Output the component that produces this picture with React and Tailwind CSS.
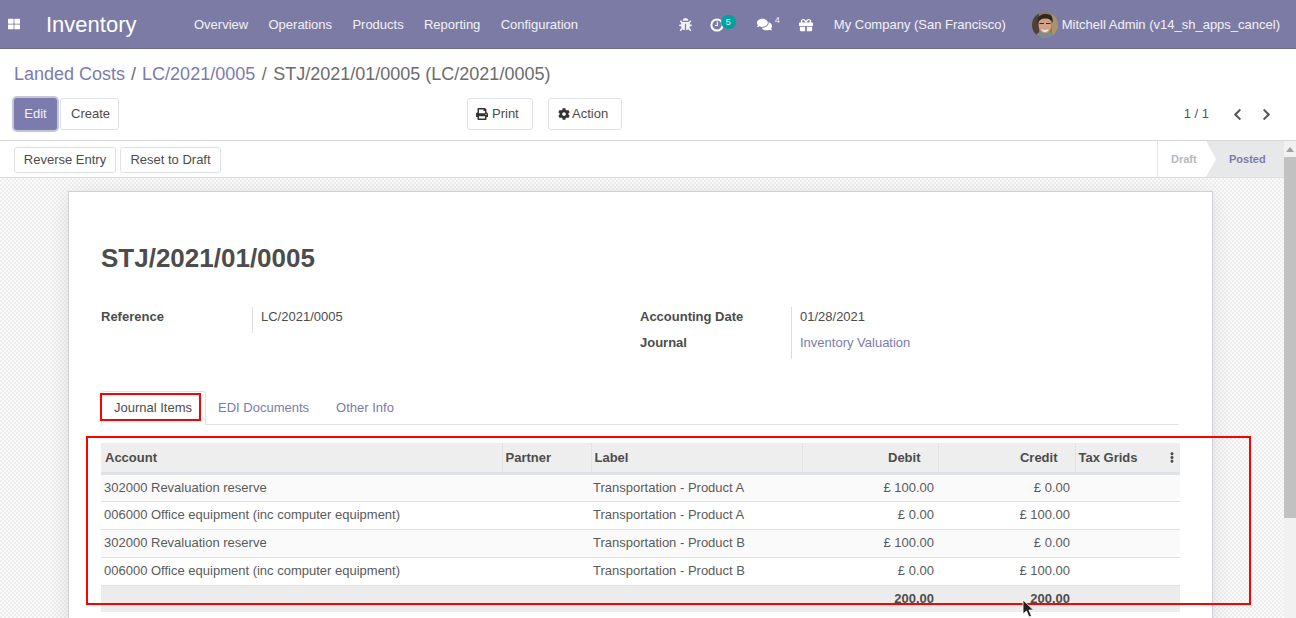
import { FaBug, FaComments, FaGift, FaPrint, FaCog, FaChevronLeft, FaChevronRight, FaEllipsisV, FaThLarge } from 'react-icons/fa';

const rows = [
  ['302000 Revaluation reserve', 'Transportation - Product A', '£ 100.00', '£ 0.00'],
  ['006000 Office equipment (inc computer equipment)', 'Transportation - Product A', '£ 0.00', '£ 100.00'],
  ['302000 Revaluation reserve', 'Transportation - Product B', '£ 100.00', '£ 0.00'],
  ['006000 Office equipment (inc computer equipment)', 'Transportation - Product B', '£ 0.00', '£ 100.00'],
];

function Avatar() {
  return (
    <svg width="26" height="26" viewBox="0 0 26 26" className="shrink-0 mr-1 blur-[0.4px]">
      <defs>
        <clipPath id="avatarClip"><circle cx="13" cy="13" r="13" /></clipPath>
      </defs>
      <g clipPath="url(#avatarClip)">
        <rect width="26" height="26" fill="#8d7a5c" />
        <rect x="0" y="0" width="7" height="26" fill="#4e4038" />
        <rect x="20" y="0" width="6" height="26" fill="#a89468" />
        <path d="M3 26c1-5 5-7 10-7s9 2 10 7z" fill="#7f8d8c" />
        <ellipse cx="13" cy="13" rx="6.500" ry="8" fill="#d0a084" />
        <path d="M5.500 11C5 4 9 2 14 2s7.500 3 6.500 9c-1-3-3-4.500-7-4.500S7 8 5.500 11z" fill="#2e2620" />
        <path d="M7.500 11.500h4.500M14 11.500h4.500" stroke="#3a2e28" strokeWidth="1" />
        <path d="M9.500 17c2 1.500 5 1.500 7 0-.5 2-2 3-3.500 3s-3-1-3.500-3z" fill="#f4ece4" />
      </g>
    </svg>
  );
}

function ClockIcon() {
  return (
    <svg width="14" height="14" viewBox="0 0 14 14" fill="none" stroke="white" className="shrink-0">
      <circle cx="7" cy="7" r="5.600" strokeWidth="2" />
      <path d="M7.300 3.500V7.500H5" strokeWidth="1.100" />
    </svg>
  );
}

function TopNav() {
  return (
    <header className="h-[49px] shrink-0 flex items-center bg-[#7c7ba5] border-b border-[#6c6b96] text-white text-[13px]">
      <FaThLarge className="ml-2 w-3 h-3 text-white shrink-0" />
      <span className="ml-[26px] text-[22px] w-[91px] whitespace-nowrap">Inventory</span>
      <nav className="ml-[57px] pt-px flex gap-[20.300px] text-white/90 whitespace-nowrap">
        <span>Overview</span>
        <span>Operations</span>
        <span>Products</span>
        <span>Reporting</span>
        <span>Configuration</span>
      </nav>
      <div className="ml-auto pt-px flex items-center pr-[16px] whitespace-nowrap">
        <FaBug className="w-[13px] h-[13px] text-white/90" />
        <div className="ml-[18px] relative w-[14px] h-[14px]">
          <ClockIcon />
          <span className="absolute -top-[3px] left-[11px] w-[15px] h-[14px] rounded-full bg-[#00a09d] text-[9px] leading-[14px] text-center text-white/90">5</span>
        </div>
        <div className="ml-[33px] flex items-start">
          <FaComments className="w-[15px] h-[15px]" />
          <span className="ml-[3px] -mt-[3px] text-[9px] leading-[12px] text-white/90">4</span>
        </div>
        <FaGift className="ml-[19px] w-[14px] h-[14px]" />
        <span className="ml-[21px] text-white/90">My Company (San Francisco)</span>
        <div className="ml-[26px] flex items-center">
          <Avatar />
          <span className="text-white/90">Mitchell Admin (v14_sh_apps_cancel)</span>
        </div>
      </div>
    </header>
  );
}

function Button({ children, className = '' }) {
  return (
    <button className={`h-8 flex items-center bg-white border border-[#dee2e6] rounded-[3px] text-[13px] text-[#4c4c4c] whitespace-nowrap ${className}`}>
      {children}
    </button>
  );
}

function ControlPanel() {
  return (
    <section className="h-[92px] shrink-0 bg-white border-b border-[#d8d8d8] px-[14px]">
      <div className="h-[49px] pt-[13px] text-[18px] leading-[24px] text-[#6c6c6c] whitespace-nowrap">
        <span className="text-[#7c7bad]">Landed Costs</span>
        <span className="px-[6px]">/</span>
        <span className="text-[#7c7bad]">LC/2021/0005</span>
        <span className="px-[6.500px]">/</span>
        <span>STJ/2021/01/0005 (LC/2021/0005)</span>
      </div>
      <div className="flex items-center">
        <button className="w-[43px] h-8 rounded-[3px] bg-[#7c7bad] text-white/90 text-[13px] ring-2 ring-[#c5c5d8]">Edit</button>
        <Button className="ml-[3px] w-[59px] pl-[10px]">Create</Button>
        <Button className="ml-[348px] w-[66px] pl-2 gap-1"><FaPrint className="w-3 h-3 text-[#333]" />Print</Button>
        <Button className="ml-[15px] w-[74px] pl-[9px] gap-[2px]"><FaCog className="w-3 h-3 text-[#333]" />Action</Button>
        <div className="ml-auto flex items-center text-[13px] text-[#555] pr-[10px]">
          <span>1 / 1</span>
          <FaChevronLeft className="ml-[23px] w-[11px] h-[13px] text-[#555]" />
          <FaChevronRight className="ml-[18px] w-[11px] h-[13px] text-[#555]" />
        </div>
      </div>
    </section>
  );
}

function StatusBar() {
  return (
    <div className="h-[37px] shrink-0 flex items-center justify-between bg-white border-b border-[#dcdcdc] pl-[14px]">
      <div className="flex gap-1 pt-px">
        <Button className="w-[102px] !h-[26px] justify-center">Reverse Entry</Button>
        <Button className="w-[101px] !h-[26px] justify-center">Reset to Draft</Button>
      </div>
      <div className="h-full flex text-[11px] font-bold border-l border-[#e5e5e5]">
        <div className="w-[49px] pl-[13px] flex items-center text-[#b4bac0] bg-white">Draft</div>
        <div className="w-[78px] pl-[23px] flex items-center text-[#7c7bad] bg-[#e6e8ea] [clip-path:polygon(0_0,100%_0,100%_100%,0_100%,10px_50%)] -ml-px">Posted</div>
      </div>
    </div>
  );
}

function Field({ label, value, link }) {
  return (
    <div className="flex h-[26px] text-[13px] leading-[20px]">
      <span className="w-[151px] font-bold text-[#4c4c4c]">{label}</span>
      <span className={`border-l border-[#dcdcdc] pl-2 h-[26px] ${link ? 'text-[#7c7bad]' : 'text-[#4c4c4c]'}`}>{value}</span>
    </div>
  );
}

function JournalTable() {
  const th = 'h-[30px] font-bold text-[13px] text-[#4c4c4c] border-b-[3px] border-r border-b-[#dee2e6] border-r-[#e2e2e2] bg-[#eeeeee]';
  return (
    <table className="mt-[18px] w-[1079px] table-fixed border-collapse text-[13px] text-[#5a5a5a]">
      <colgroup>
        <col className="w-[401px]" />
        <col className="w-[89px]" />
        <col className="w-[211px]" />
        <col className="w-[136px]" />
        <col className="w-[137px]" />
        <col className="w-[105px]" />
      </colgroup>
      <thead>
        <tr>
          <th className={`${th} text-left pl-1`}>Account</th>
          <th className={`${th} text-left pl-[3px]`}>Partner</th>
          <th className={`${th} text-left pl-[3px]`}>Label</th>
          <th className={`${th} text-right pr-[17px]`}>Debit</th>
          <th className={`${th} text-right pr-[17px]`}>Credit</th>
          <th className={`${th} !border-r-0 text-left pl-[3px]`}>
            <div className="flex items-center justify-between pr-[3px]">
              Tax Grids
              <FaEllipsisV className="w-[10px] h-[11px] text-[#4c4c4c]" />
            </div>
          </th>
        </tr>
      </thead>
      <tbody>
        {rows.map((row, i) => (
          <tr key={i} className={`h-[28px] border-b border-[#dee2e6] ${i % 2 === 0 ? 'bg-[#fafafa]' : 'bg-white'}`}>
            <td className="pl-[3px] whitespace-nowrap">{row[0]}</td>
            <td></td>
            <td className="pl-[2px] whitespace-nowrap">{row[1]}</td>
            <td className="text-right pr-1 whitespace-nowrap">{row[2]}</td>
            <td className="text-right pr-[5px] whitespace-nowrap">{row[3]}</td>
            <td></td>
          </tr>
        ))}
        <tr className="h-[27px] bg-[#ececec] font-bold text-[#4c4c4c]">
          <td colSpan={3}></td>
          <td className="text-right pr-1 pb-px">200.00</td>
          <td className="text-right pr-[5px] pb-px">200.00</td>
          <td></td>
        </tr>
      </tbody>
    </table>
  );
}

function Sheet() {
  return (
    <div className="ml-[68px] mt-[13px] w-[1145px] bg-white border border-[#d0d0d8] pl-8 pr-[33px] pt-[49px] pb-4 h-[500px] shrink-0 shadow-[0_4px_20px_rgba(0,0,0,0.1)]">
      <h1 className="text-[26px] leading-[34px] font-bold text-[#4c4c4c]">STJ/2021/01/0005</h1>
      <div className="mt-[32px] flex h-[52px]">
        <div className="w-[539px]">
          <Field label="Reference" value="LC/2021/0005" />
        </div>
        <div>
          <Field label="Accounting Date" value="01/28/2021" />
          <Field label="Journal" value="Inventory Valuation" link />
        </div>
      </div>
      <div className="mt-[33px] h-[33px] flex items-end border-b border-[#dee2e6] text-[13px] text-[#7c7bad]">
        <div className="w-[105px] h-[34px] pl-[12px] pb-[2px] flex items-center bg-white border border-b-0 border-[#dee2e6] rounded-t-[3px] text-[#4c4c4c] -mb-px">Journal Items</div>
        <div className="ml-[12px] h-[33px] flex items-center">EDI Documents</div>
        <div className="ml-[27px] h-[33px] flex items-center">Other Info</div>
      </div>
      <JournalTable />
    </div>
  );
}

function Scrollbar() {
  return (
    <div className="w-3 shrink-0 flex flex-col bg-[#f1f1f1]">
      <div className="h-4 flex items-center justify-center">
        <div className="w-0 h-0 border-x-[4px] border-x-transparent border-b-[5px] border-b-[#a3a3a3]" />
      </div>
      <div className="h-[361px] bg-[#c1c1c1]" />
    </div>
  );
}

export default function App() {
  return (
    <div className="relative h-[618px] w-[1296px] overflow-hidden flex flex-col bg-white font-['Liberation_Sans',Arial,sans-serif]">
      <TopNav />
      <ControlPanel />
      <div className="flex-1 flex min-h-0">
        <div className="flex-1 min-w-0 flex flex-col overflow-hidden">
          <StatusBar />
          <div className="flex-1 min-h-0 overflow-hidden bg-[#f4f4f4] bg-[repeating-conic-gradient(#eeeeee_0_25%,#fafafa_0_50%)] bg-[length:4px_4px]">
            <Sheet />
          </div>
        </div>
        <Scrollbar />
      </div>

      {/* annotation boxes from the screenshot */}
      <div className="absolute left-[100px] top-[393px] w-[101px] h-[28px] border-2 border-[#ff0000] pointer-events-none" />
      <div className="absolute left-[86px] top-[436px] w-[1165px] h-[169px] border-2 border-[#ff0000] pointer-events-none" />

      {/* mouse cursor */}
      <svg width="12" height="19" viewBox="0 0 12 19" className="absolute left-[1022px] top-[599px]">
        <path d="M1 1v14l3.500-3 2.500 6 2.500-1-2.500-6h4.500z" fill="#222" stroke="#fff" strokeWidth="0.8" />
      </svg>
    </div>
  );
}
